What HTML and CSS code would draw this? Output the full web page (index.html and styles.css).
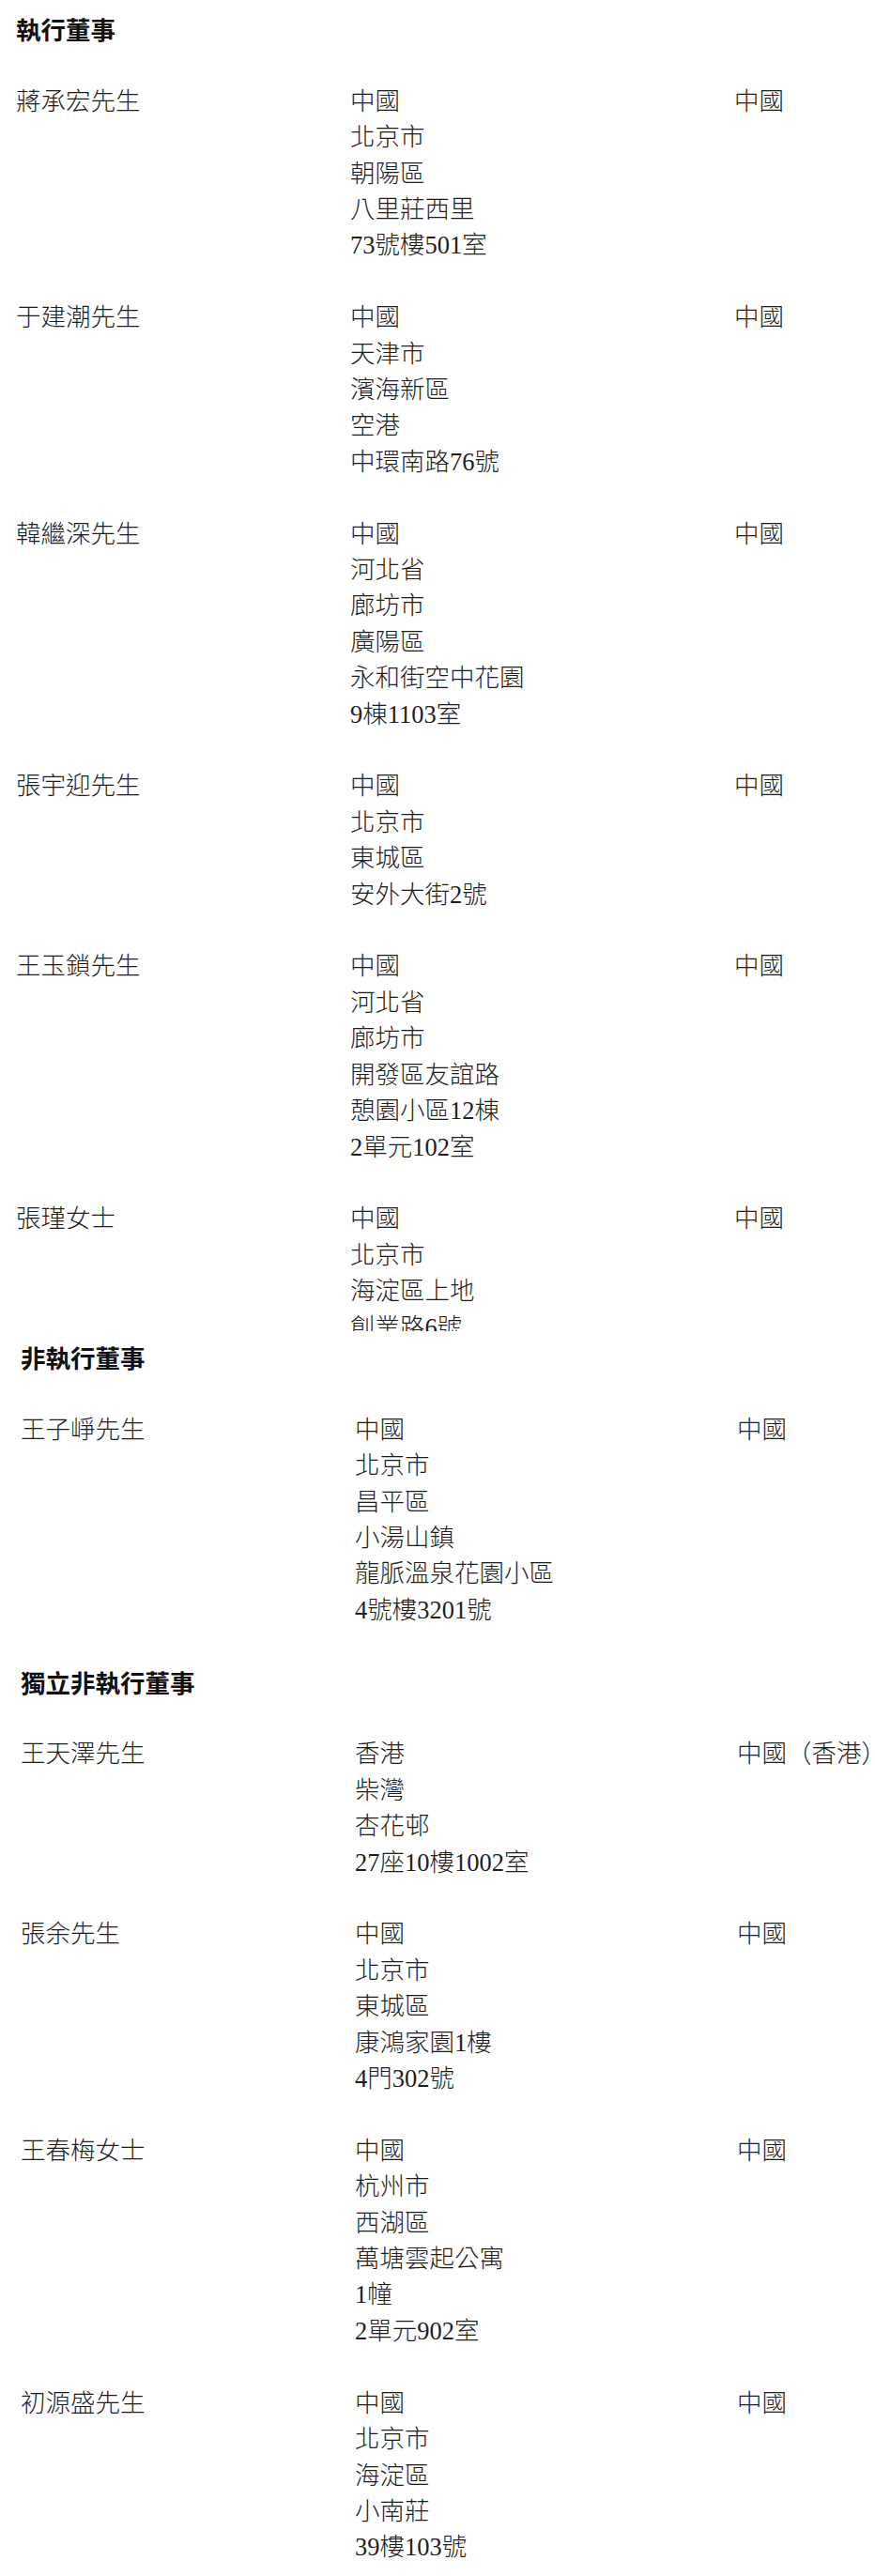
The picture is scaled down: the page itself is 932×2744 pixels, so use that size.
FILE: index.html
```html
<!DOCTYPE html>
<html lang="zh-Hant">
<head>
<meta charset="utf-8">
<title>董事</title>
<link rel="stylesheet" href="styles.css">
</head>
<body>
<div class="sec sec-a">
  <h2 class="heading">執行董事</h2>
  <div class="row">
    <div class="name">蔣承宏先生</div>
    <div class="addr"><div>中國</div><div>北京市</div><div>朝陽區</div><div>八里莊西里</div><div>73號樓501室</div></div>
    <div class="country">中國</div>
  </div>
  <div class="row">
    <div class="name">于建潮先生</div>
    <div class="addr"><div>中國</div><div>天津市</div><div>濱海新區</div><div>空港</div><div>中環南路76號</div></div>
    <div class="country">中國</div>
  </div>
  <div class="row">
    <div class="name">韓繼深先生</div>
    <div class="addr"><div>中國</div><div>河北省</div><div>廊坊市</div><div>廣陽區</div><div>永和街空中花園</div><div>9棟1103室</div></div>
    <div class="country">中國</div>
  </div>
  <div class="row">
    <div class="name">張宇迎先生</div>
    <div class="addr"><div>中國</div><div>北京市</div><div>東城區</div><div>安外大街2號</div></div>
    <div class="country">中國</div>
  </div>
  <div class="row">
    <div class="name">王玉鎖先生</div>
    <div class="addr"><div>中國</div><div>河北省</div><div>廊坊市</div><div>開發區友誼路</div><div>憩園小區12棟</div><div>2單元102室</div></div>
    <div class="country">中國</div>
  </div>
  <div class="row">
    <div class="name">張瑾女士</div>
    <div class="addr"><div>中國</div><div>北京市</div><div>海淀區上地</div><div>創業路6號</div></div>
    <div class="country">中國</div>
  </div>
</div>
<div class="sec sec-b">
  <h2 class="heading">非執行董事</h2>
  <div class="row">
    <div class="name">王子崢先生</div>
    <div class="addr"><div>中國</div><div>北京市</div><div>昌平區</div><div>小湯山鎮</div><div>龍脈溫泉花園小區</div><div>4號樓3201號</div></div>
    <div class="country">中國</div>
  </div>
  <h2 class="heading">獨立非執行董事</h2>
  <div class="row">
    <div class="name">王天澤先生</div>
    <div class="addr"><div>香港</div><div>柴灣</div><div>杏花邨</div><div>27座10樓1002室</div></div>
    <div class="country">中國（香港<span class="half">）</span></div>
  </div>
  <div class="row">
    <div class="name">張余先生</div>
    <div class="addr"><div>中國</div><div>北京市</div><div>東城區</div><div>康鴻家園1樓</div><div>4門302號</div></div>
    <div class="country">中國</div>
  </div>
  <div class="row">
    <div class="name">王春梅女士</div>
    <div class="addr"><div>中國</div><div>杭州市</div><div>西湖區</div><div>萬塘雲起公寓</div><div>1幢</div><div>2單元902室</div></div>
    <div class="country">中國</div>
  </div>
  <div class="row">
    <div class="name">初源盛先生</div>
    <div class="addr"><div>中國</div><div>北京市</div><div>海淀區</div><div>小南莊</div><div>39樓103號</div></div>
    <div class="country">中國</div>
  </div>
</div>
</body>
</html>
```
FILE: styles.css
```css
html, body {
  margin: 0;
  padding: 0;
  background: #ffffff;
}
body {
  font-family: "Liberation Serif", "Noto Sans CJK TC", serif;
  font-size: 26.5px;
  line-height: 38.4px;
  font-weight: 300;
  color: #1e1e1e;
}
.sec {
  box-sizing: border-box;
}
.sec-a {
  height: 1418px;
  overflow: hidden;
  padding: 12px 0 0 17px;
}
.sec-b {
  padding: 9px 0 0 22px;
}
.heading {
  margin: 0 0 38.4px 0;
  font-family: "Noto Sans CJK TC", sans-serif;
  font-size: 26.5px;
  line-height: 38.4px;
  font-weight: 700;
  color: #111111;
}
.row {
  display: grid;
  grid-template-columns: 356px 409px 1fr;
  margin-bottom: 38.4px;
}
.sec-b .row {
  grid-template-columns: 356px 407px 1fr;
}
.name, .addr, .country {
  white-space: nowrap;
}
.half {
  font-feature-settings: "halt";
}
```
